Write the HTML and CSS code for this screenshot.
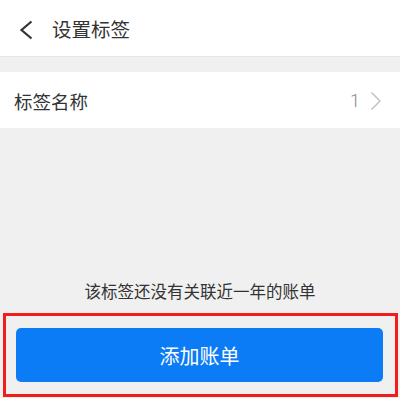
FILE: index.html
```html
<!DOCTYPE html>
<html lang="zh-CN">
<head>
<meta charset="utf-8">
<link rel="stylesheet" href="styles.css">
</head>
<body>
<div class="page">
  <header class="topbar">
    <svg class="back" width="16" height="20" viewBox="0 0 16 20"><path d="M13.5 1.5 L3.5 10 L13.5 18.5" fill="none" stroke="#333" stroke-width="2.2"/></svg>
    <span class="title">设置标签</span>
  </header>
  <div class="row">
    <span class="label">标签名称</span>
    <span class="value">1</span>
    <svg class="arrow" width="12" height="20" viewBox="0 0 12 20"><path d="M1.5 1.5 L10 10 L1.5 18.5" fill="none" stroke="#c4c4c4" stroke-width="1.5"/></svg>
  </div>
  <div class="empty">
    <p class="msg">该标签还没有关联近一年的账单</p>
  </div>
  <div class="footer">
    <button class="add">添加账单</button>
  </div>
</div>
</body>
</html>
```
FILE: styles.css
```css
html, body {
  margin: 0;
  padding: 0;
}
body {
  background: #f0f0f0;
  font-family: "Noto Sans CJK SC", "Noto Sans", sans-serif;
}
.page {
  width: 400px;
  height: 398px;
  display: flex;
  flex-direction: column;
  overflow: hidden;
}
.topbar {
  height: 56px;
  background: #fff;
  display: flex;
  align-items: center;
  flex-shrink: 0;
  margin-bottom: 16px;
  box-shadow: 0 1px 0 #e6e6e6;
}
.back {
  margin-left: 18px;
  margin-top: 4px;
}
.title {
  margin-left: 18px;
  font-size: 19.5px;
  color: #333;
  margin-top: 1px;
}
.row {
  height: 56px;
  background: #fff;
  display: flex;
  align-items: center;
  padding: 0 18px 0 14px;
  flex-shrink: 0;
}
.label {
  flex: 1;
  font-size: 18.5px;
  color: #333;
  margin-top: 1px;
}
.value {
  font-family: "Roboto", "Noto Sans", sans-serif;
  font-size: 18px;
  color: #888;
  font-weight: 300;
  margin-right: 10px;
}
.arrow {
  margin-top: 1px;
}
.empty {
  flex: 1;
  display: flex;
  align-items: flex-end;
  justify-content: center;
}
.msg {
  margin: 0 0 10px;
  font-size: 16.5px;
  line-height: 24px;
  color: #333;
}
.footer {
  height: 84px;
  margin: 0 2px 1px 3px;
  border: 3px solid #f21c1c;
  padding: 12px 12px 12px 10px;
  box-sizing: border-box;
  flex-shrink: 0;
  display: flex;
}
.add {
  flex: 1;
  border: none;
  border-radius: 5px;
  background: #0b7cf6;
  color: #fff;
  font-family: "Noto Sans CJK SC", "Noto Sans", sans-serif;
  font-size: 20px;
  padding: 0;
}
```
